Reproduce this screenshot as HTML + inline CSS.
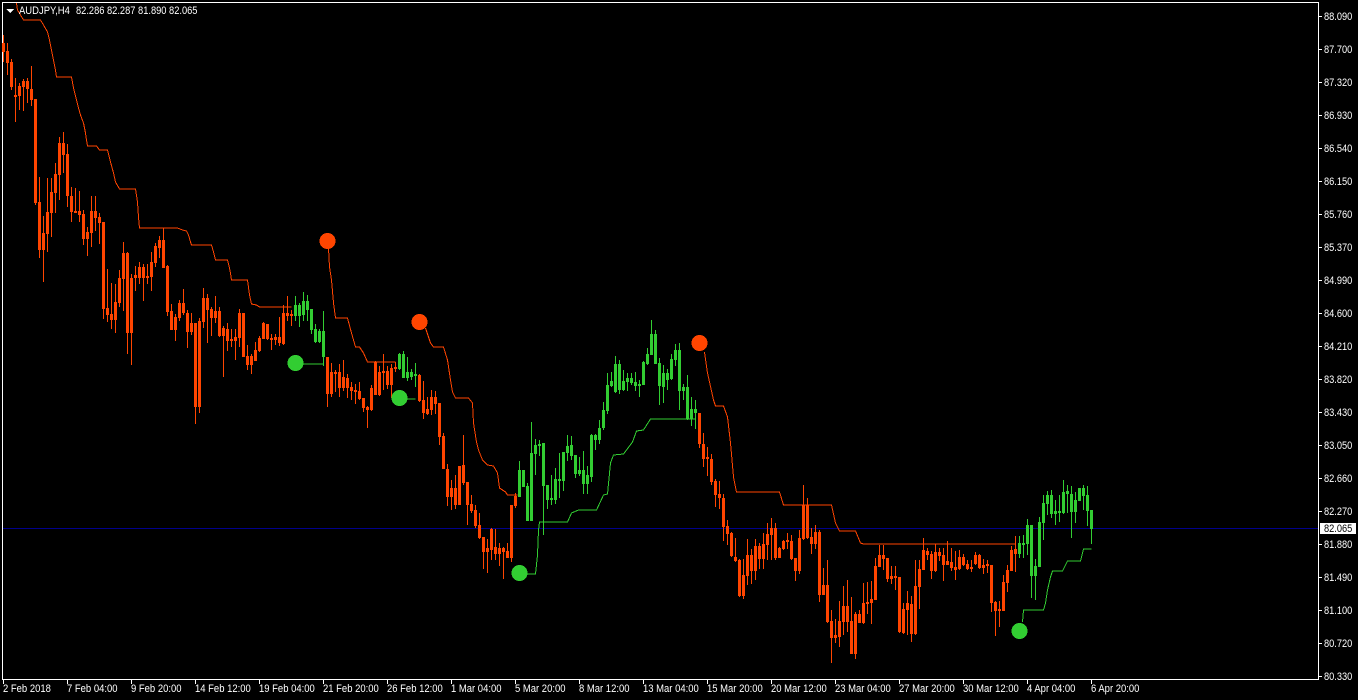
<!DOCTYPE html>
<html><head><meta charset="utf-8"><style>
html,body{margin:0;padding:0;background:#000;width:1358px;height:700px;overflow:hidden}
#c{position:relative;width:1358px;height:700px;background:#000;font-family:"Liberation Sans",sans-serif;font-size:11px;color:#fff;line-height:12px}
svg{position:absolute;left:0;top:0}
.p,.t,.h{position:absolute;white-space:pre;transform-origin:0 50%}
.p{left:1324px;transform:scaleX(.84)}
.t{top:683px;transform:scaleX(.86)}
.h{transform:scaleX(.86)}
</style></head><body><div id="c">
<svg width="1358" height="700" viewBox="0 0 1358 700" shape-rendering="crispEdges">
<path d="M2.5 2.5H1318.5V679.5H2.5Z" fill="none" stroke="#fff"/>
<path d="M3 528.5H1318" stroke="#00008b"/>
<path fill="none" stroke="#fff" d="M1319 16.5h3M1319 49.5h3M1319 82.5h3M1319 115.5h3M1319 148.5h3M1319 181.5h3M1319 214.5h3M1319 247.5h3M1319 280.5h3M1319 313.5h3M1319 346.5h3M1319 379.5h3M1319 412.5h3M1319 445.5h3M1319 478.5h3M1319 511.5h3M1319 544.5h3M1319 577.5h3M1319 610.5h3M1319 643.5h3M1319 676.5h3M3.5 680v4M67.5 680v4M131.5 680v4M195.5 680v4M259.5 680v4M323.5 680v4M387.5 680v4M451.5 680v4M515.5 680v4M579.5 680v4M643.5 680v4M707.5 680v4M771.5 680v4M835.5 680v4M899.5 680v4M963.5 680v4M1027.5 680v4M1091.5 680v4"/>
<g transform="translate(.5 0)" fill="none">
<path stroke="#ff4500" d="M3 35V62M7 43V75M11 59V90M15 78V122M19 83V110M23 79V111M27 78V103M31 66V106M35 99V205M39 177V258M43 216V282M47 178V252M51 178V237M55 163V213M59 137V200M63 132V173M67 144V207M71 187V222M75 188V213M79 191V222M83 210V245M87 227V256M91 196V247M95 196V231M99 213V244M103 222V319M107 269V322M111 283V329M115 284V333M119 270V307M123 242V311M127 252V354M131 274V365M135 266V291M139 262V284M143 264V301M147 264V284M151 252V291M155 243V267M159 236V258M163 228V268M167 265V316M171 304V330M175 314V341M179 300V321M183 289V315M187 310V348M191 313V335M195 323V424M199 318V413M203 288V328M207 294V343M211 307V336M215 296V323M219 307V337M223 326V377M227 323V351M231 329V347M235 329V360M239 309V347M243 313V357M247 345V370M251 354V374M255 342V361M259 336V352M263 322V339M267 324V340M271 334V350M275 334V345M279 317V346M283 305V345M287 296V321M291 310V326M327 357V407M331 363V397M335 370V392M339 364V397M343 360V391M347 374V398M351 382V400M355 384V404M359 382V400M363 398V412M367 406V428M371 385V411M375 361V395M379 366V396M383 354V390M387 366V389M391 364V398M395 362V372M419 374V402M423 381V419M427 397V415M431 390V415M435 391V414M439 403V445M443 433V469M447 464V506M451 480V510M455 475V509M459 466V505M463 435V485M467 482V525M471 495V513M475 505V528M479 513V539M483 537V569M487 539V573M491 528V560M495 529V560M499 543V566M503 547V579M507 543V558M511 505V562M515 493V508M699 413V448M703 433V467M707 447V476M711 454V485M715 479V507M719 481V509M723 494V541M727 520V545M731 532V557M735 538V562M739 559V597M743 559V599M747 539V585M751 549V584M755 539V580M759 543V569M763 533V569M767 523V560M771 518V560M775 523V560M779 547V558M783 540V550M787 533V549M791 535V560M795 558V581M799 530V574M803 485V540M807 498V539M811 528V554M815 525V549M819 530V602M823 568V595M827 560V623M831 610V663M835 619V643M839 601V647M843 586V635M847 580V632M851 597V654M855 612V659M859 610V623M863 583V624M867 582V614M871 581V624M875 558V600M879 545V567M883 545V570M887 558V582M891 566V584M895 566V590M899 577V633M903 603V634M907 591V635M911 596V642M915 560V635M919 560V609M923 538V570M927 548V560M931 551V579M935 544V572M939 548V561M943 548V581M947 541V565M951 548V571M955 551V580M959 550V570M963 554V566M967 560V570M971 560V572M975 552V565M979 554V569M983 559V574M987 560V573M991 565V612M995 601V636M999 601V627M1003 575V611M1007 565V592M1011 546V571M1015 536V572"/>
<path stroke="#ff4500" stroke-width="3" d="M3 43V52M7 51V63M11 62V87M15 95V97M19 86V96M23 81V87M27 81V89M31 89V100M35 99V203M39 202V250M43 233V250M47 212V234M51 192V213M55 174V193M59 143V175M63 143V155M67 154V196M71 196V212M75 211V213M79 211V215M83 214V239M87 232V239M91 211V233M95 211V218M99 217V223M103 222V309M107 308V315M111 314V320M115 302V320M119 278V303M123 253V279M127 253V333M131 278V333M135 275V278M139 267V278M143 267V278M147 276V278M151 262V277M155 246V263M159 240V248M163 240V268M167 266V312M171 311V330M175 317V330M179 303V318M183 303V313M187 313V332M191 323V332M195 323V407M199 321V407M203 298V322M207 298V310M211 309V318M215 311V318M219 311V336M223 328V336M227 329V341M231 339V341M235 337V341M239 313V338M243 313V357M247 356V365M251 356V365M255 350V361M259 338V351M263 323V339M267 324V339M271 338V340M275 337V340M279 337V343M283 313V344M287 313V316M291 314V316M327 357V394M331 372V394M335 372V374M339 372V388M343 377V388M347 378V388M351 387V391M355 390V392M359 391V399M363 398V408M367 407V410M371 388V410M375 362V395M379 372V395M383 371V373M387 371V385M391 368V385M395 367V369M419 375V401M423 400V413M427 409V414M431 397V410M435 397V404M439 403V437M443 436V469M447 469V497M451 488V497M455 488V505M459 466V505M463 465V483M467 482V505M471 504V511M475 510V526M479 525V538M483 537V552M487 548V552M491 529V550M495 547V554M499 548V554M503 548V552M507 551V558M511 505V558M515 496V506M699 413V444M703 444V459M707 457V459M711 459V482M715 481V495M719 494V498M723 498V527M727 526V534M731 533V556M735 557V561M739 560V596M743 575V596M747 555V576M751 555V571M755 546V571M759 546V559M763 544V559M767 534V545M771 528V535M775 528V558M779 548V558M783 541V549M787 540V542M791 541V559M795 558V571M799 538V571M803 505V539M807 505V538M811 537V544M815 532V544M819 532V595M823 585V595M827 585V622M831 621V638M835 635V638M839 621V637M843 606V622M847 606V622M851 621V654M855 614V654M859 614V623M863 603V623M867 602V604M871 599V603M875 566V600M879 555V567M883 555V559M887 558V579M891 576V579M895 576V578M899 577V632M903 609V633M907 603V610M911 604V634M915 586V634M919 569V587M923 550V570M927 551V555M931 554V571M935 552V571M939 552V556M943 555V565M947 561V565M951 562V568M955 567V570M959 557V569M963 557V565M967 564V569M971 567V569M975 555V564M979 555V568M983 565V568M987 564V566M991 565V603M995 602V611M999 609V611M1003 582V611M1007 570V583M1011 550V571M1015 549V554"/>
<path stroke="#32cd32" d="M295 296V321M299 303V327M303 292V321M307 295V321M311 309V334M315 324V343M319 329V343M323 311V366M399 353V370M403 351V378M407 357V381M411 369V380M415 363V387M519 461V497M523 470V487M527 483V521M531 422V521M535 439V475M539 440V456M543 443V535M547 485V509M551 475V505M555 468V504M559 453V498M563 452V491M567 435V461M571 436V460M575 455V478M579 457V476M583 451V494M587 466V494M591 434V482M595 434V450M599 420V444M603 402V430M607 373V414M611 372V387M615 356V393M619 360V394M623 370V391M627 373V391M631 373V385M635 372V391M639 380V397M643 361V385M647 348V365M651 320V355M655 330V364M659 358V405M663 365V403M667 369V390M671 354V380M675 344V366M679 343V410M683 384V400M687 375V420M691 397V426M695 400V429M1019 536V558M1023 535V558M1027 519V555M1031 525V598M1035 559V600M1039 517V567M1043 495V540M1047 491V515M1051 490V518M1055 500V525M1059 495V522M1063 480V514M1067 485V513M1071 486V538M1075 492V523M1079 488V501M1083 485V510M1087 486V526M1091 510V544"/>
<path stroke="#32cd32" stroke-width="3" d="M295 305V316M299 305V316M303 301V315M307 301V310M311 309V330M315 329V342M319 331V342M323 331V357M399 354V369M403 354V378M407 372V378M411 372V377M415 374V376M519 470V497M523 470V487M527 486V521M531 453V521M535 445V454M539 444V446M543 443V486M547 485V500M551 498V500M555 479V500M559 479V481M563 452V481M567 446V453M571 445V456M575 455V474M579 470V474M583 470V484M587 475V484M591 435V477M595 435V440M599 428V440M603 410V428M607 385V411M611 381V386M615 364V392M619 364V390M623 381V390M627 378V382M631 378V383M635 382V386M639 384V386M643 362V385M647 354V364M651 334V355M655 334V364M659 363V386M663 373V387M667 373V380M671 359V379M675 350V360M679 350V391M683 387V391M687 387V419M691 409V419M695 409V413M1019 543V554M1023 543V545M1027 525V544M1031 525V576M1035 566V576M1039 522V567M1043 503V523M1047 495V504M1051 495V514M1055 511V514M1059 511V513M1063 492V513M1067 491V494M1071 494V512M1075 500V512M1079 488V501M1083 488V496M1087 495V511M1091 510V529"/>
<g stroke="#ff4500" stroke-linejoin="round">
<path d="M16 3L17 10L20 15L23 20H40L43 25L47 32L49 40L51 50L53 60L55 70L56 77H71L73 88L76 100L78 108L80 115L83 123L85 133L86 140L87 146H96L99 150H107L110 162L113 173L115 182L119 189H135L137 202L138 217L139 228H177L182 230L186 231L188 235L190 242L191 245H211L213 252L215 260H227L229 268L230 273L231 280H247L249 295L251 304L256 305L259 307H291"/>
<path d="M328 248L329 267L331 280L333 303L335 318H347L351 333L355 347H359L363 353L367 362H395"/>
<path d="M425 328L430 343L433 347H443L447 360L450 380L452 392L455 398H468L472 403L473 423L476 442L478 450L482 460L487 465L493 466L497 473L499 488L505 492L507 495H517"/>
<path d="M704 352L707 373L713 400L715 406H723L727 417L730 443L733 477L736 492H779L783 505H831L835 523L839 531H855L860 543L863 544H1015"/>
</g>
<g stroke="#32cd32" stroke-linejoin="round">
<path d="M527 574H535L537 555L538 530L539 522H567L571 513L578 510H596L603 495L607 494L610 463L613 455L623 454L632 442L636 431L643 430L650 419H695"/>
<path d="M303 364H323"/>
<path d="M407 399H415"/>
<path d="M1022 622L1023 610H1043L1045 603L1047 590L1050 577L1052 571H1062L1067 561H1080L1083 549H1091"/>
</g>
</g>
<circle cx="327.5" cy="241" r="8" fill="#ff4500"/>
<circle cx="419.5" cy="322" r="8" fill="#ff4500"/>
<circle cx="699.5" cy="343" r="8" fill="#ff4500"/>
<circle cx="295.5" cy="363" r="8" fill="#32cd32"/>
<circle cx="399.5" cy="398" r="8" fill="#32cd32"/>
<circle cx="519.5" cy="573" r="8" fill="#32cd32"/>
<circle cx="1019.5" cy="631" r="8" fill="#32cd32"/>
<path d="M6 9H14L10 13Z" fill="#fff"/>
<rect x="1320" y="523" width="36" height="11" fill="#fff"/>
</svg>
<span class="h" style="left:19px;top:5px">AUDJPY,H4</span>
<span class="h" style="left:76px;top:5px;transform:scaleX(.845)">82.286 82.287 81.890 82.065</span>
<span class="p" style="top:11px">88.090</span>
<span class="p" style="top:44px">87.700</span>
<span class="p" style="top:77px">87.320</span>
<span class="p" style="top:110px">86.930</span>
<span class="p" style="top:143px">86.540</span>
<span class="p" style="top:176px">86.150</span>
<span class="p" style="top:209px">85.760</span>
<span class="p" style="top:242px">85.370</span>
<span class="p" style="top:275px">84.990</span>
<span class="p" style="top:308px">84.600</span>
<span class="p" style="top:341px">84.210</span>
<span class="p" style="top:374px">83.820</span>
<span class="p" style="top:407px">83.430</span>
<span class="p" style="top:440px">83.050</span>
<span class="p" style="top:473px">82.660</span>
<span class="p" style="top:506px">82.270</span>
<span class="p" style="top:523px;color:#000">82.065</span>
<span class="p" style="top:539px">81.880</span>
<span class="p" style="top:572px">81.490</span>
<span class="p" style="top:605px">81.100</span>
<span class="p" style="top:638px">80.720</span>
<span class="p" style="top:671px">80.330</span>
<span class="t" style="left:3px">2 Feb 2018</span>
<span class="t" style="left:67px">7 Feb 04:00</span>
<span class="t" style="left:131px">9 Feb 20:00</span>
<span class="t" style="left:195px">14 Feb 12:00</span>
<span class="t" style="left:259px">19 Feb 04:00</span>
<span class="t" style="left:323px">21 Feb 20:00</span>
<span class="t" style="left:387px">26 Feb 12:00</span>
<span class="t" style="left:451px">1 Mar 04:00</span>
<span class="t" style="left:515px">5 Mar 20:00</span>
<span class="t" style="left:579px">8 Mar 12:00</span>
<span class="t" style="left:643px">13 Mar 04:00</span>
<span class="t" style="left:707px">15 Mar 20:00</span>
<span class="t" style="left:771px">20 Mar 12:00</span>
<span class="t" style="left:835px">23 Mar 04:00</span>
<span class="t" style="left:899px">27 Mar 20:00</span>
<span class="t" style="left:963px">30 Mar 12:00</span>
<span class="t" style="left:1027px">4 Apr 04:00</span>
<span class="t" style="left:1091px">6 Apr 20:00</span>
</div></body></html>
